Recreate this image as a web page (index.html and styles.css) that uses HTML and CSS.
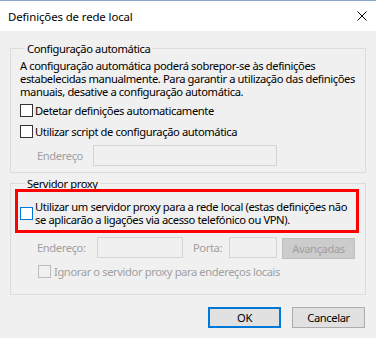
FILE: index.html
```html
<!DOCTYPE html>
<html lang="pt">
<head>
<meta charset="utf-8">
<title>Definições de rede local</title>
<link rel="stylesheet" href="styles.css">
</head>
<body>
<div class="window">
  <div class="titlebar">
    <span class="title">Definições de rede local</span>
    <svg class="close" width="10" height="10" viewBox="0 0 10 10"><path d="M0.5 0.5L9.5 9.5M9.5 0.5L0.5 9.5" stroke="#000" stroke-width="1" fill="none"/></svg>
  </div>
  <div class="content">
    <fieldset class="group group-auto">
      <legend>Configuração automática</legend>
      <p class="desc">A configuração automática poderá sobrepor-se às definições<br>estabelecidas manualmente. Para garantir a utilização das definições<br>manuais, desative a configuração automática.</p>
      <label class="check first"><span class="box"></span><span>Detetar definições automaticamente</span></label>
      <label class="check second"><span class="box"></span><span>Utilizar script de configuração automática</span></label>
      <div class="addr-row">
        <span class="dim lbl-addr1">Endereço</span>
        <span class="field field-script"></span>
      </div>
    </fieldset>
    <fieldset class="group group-proxy">
      <legend>Servidor proxy</legend>
      <div class="proxy-row">
        <span class="box focus"></span>
        <span class="proxy-text">Utilizar um servidor proxy para a rede local (estas definições não<br>se aplicarão a ligações via acesso telefónico ou VPN).</span>
        <span class="highlight"></span>
      </div>
      <div class="proxy-addr">
        <span class="dim lbl-addr2">Endereço:</span>
        <span class="field field-addr"></span>
        <span class="dim lbl-port">Porta:</span>
        <span class="field field-port"></span>
        <span class="btn btn-disabled">Avançadas</span>
      </div>
      <label class="check bypass"><span class="box disabled"></span><span class="dim">Ignorar o servidor proxy para endereços locais</span></label>
    </fieldset>
    <div class="footer">
      <span class="btn btn-default">OK</span>
      <span class="btn">Cancelar</span>
    </div>
  </div>
</div>
</body>
</html>
```
FILE: styles.css
```css
* { box-sizing: border-box; }
html, body { margin: 0; padding: 0; }
body {
  background: #f0f0f0;
  font-family: "Noto Sans", "Open Sans", sans-serif;
  font-size: 11.2px;
  letter-spacing: -0.4px;
  line-height: 13px;
  color: #000;
  white-space: nowrap;
}
.window {
  width: 376px;
  height: 338px;
  border-top: 1px solid #8aa6cc;
  overflow: hidden;
}
.titlebar {
  height: 30px;
  background: #fff;
  display: flex;
  align-items: center;
  justify-content: space-between;
  padding: 0 9px 0 8px;
}
.title { letter-spacing: -0.1px; font-size: 11.4px; }
.close { display: block; }
.content {
  padding: 0 10px;
}
.group {
  margin: 0;
  border: 1px solid #dcdcdc;
  padding: 0 9px;
  min-width: 0;
}
.group legend {
  padding: 0 2px;
  margin-left: 5px;
  line-height: 13px;
}
.group-auto { margin-top: 11px; padding-bottom: 6px; }
.group-proxy { margin-top: 4px; padding-bottom: 16px; }
.desc { margin: 4px 0 0; }
.check {
  display: flex;
  align-items: center;
  gap: 2px;
}
.check.first { margin-top: 6px; }
.check.second { margin-top: 8px; }
.box {
  display: block;
  width: 13px;
  height: 13px;
  border: 1px solid #333;
  background: #fff;
  flex: none;
}
.box.focus { border-color: #0078d7; }
.box.disabled { border-color: #bcbcbc; background: #f0f0f0; }
.dim { color: #a0a0a0; }
.addr-row {
  display: flex;
  align-items: center;
  margin-top: 7px;
  padding-left: 17px;
}
.lbl-addr1 { width: 56px; }
.field {
  display: block;
  height: 21px;
  border: 1px solid #d4d4d4;
  background: #f0f0f0;
}
.field-script { width: 184px; }
.proxy-row {
  position: relative;
  display: flex;
  align-items: center;
  gap: 2px;
  margin-top: 10px;
}
.highlight {
  position: absolute;
  top: -11px;
  bottom: -7px;
  left: -5px;
  right: -3px;
  border: 3px solid #ff0000;
  pointer-events: none;
}
.proxy-addr {
  display: flex;
  align-items: center;
  margin-top: 10px;
  padding-left: 17px;
}
.lbl-addr2 { width: 60px; }
.field-addr { width: 86px; }
.lbl-port { width: 36px; margin-left: 10px; }
.field-port { width: 48px; }
.btn {
  display: flex;
  align-items: center;
  justify-content: center;
  width: 73px;
  height: 21px;
  border: 1px solid #adadad;
  background: #e1e1e1;
}
.btn-disabled {
  margin-left: 5px;
  margin-top: 2px;
  background: #cccccc;
  border-color: #bfbfbf;
  color: #a0a0a0;
}
.bypass { margin-top: 6px; padding-left: 18px; gap: 3px; }
.footer {
  display: flex;
  justify-content: flex-end;
  gap: 11px;
  margin-top: 12px;
  padding-right: 1px;
}
.btn-default { border: 2px solid #0078d7; }
```
